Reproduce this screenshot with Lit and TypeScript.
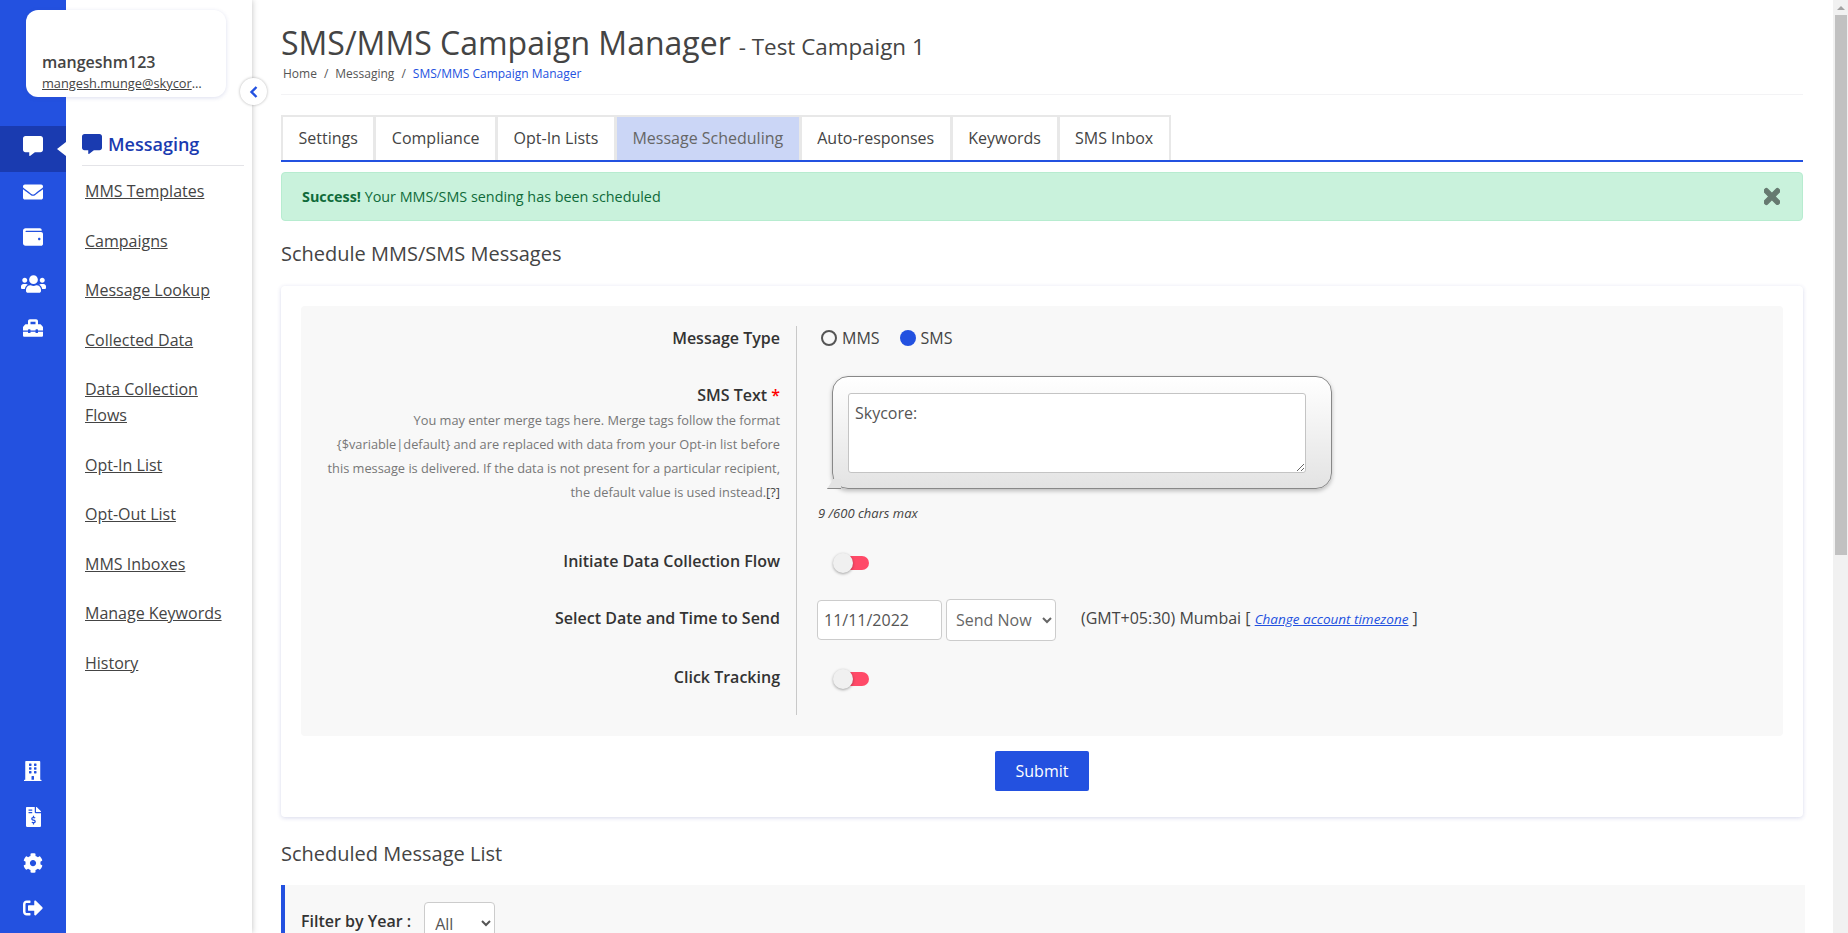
import { LitElement, html, css, svg } from "lit";
import { customElement } from "lit/decorators.js";

const I: Record<string, [number, string]> = {
  chat: [512, "M448 0H64C28.7 0 0 28.7 0 64v288c0 35.3 28.7 64 64 64h96v84c0 9.8 11.2 15.5 19.1 9.7L304 416h144c35.3 0 64-28.7 64-64V64c0-35.3-28.7-64-64-64z"],
  mail: [512, "M502.3 190.8c3.9-3.1 9.7-.2 9.7 4.7V400c0 26.5-21.5 48-48 48H48c-26.5 0-48-21.5-48-48V195.6c0-5 5.7-7.8 9.7-4.7 22.4 17.4 52.1 39.5 154.1 113.6 21.1 15.4 56.7 47.8 92.2 47.6 35.7.3 72-32.8 92.3-47.6 102-74.1 131.6-96.3 154-113.7zM256 320c23.2.4 56.6-29.2 73.4-41.4 132.7-96.3 142.8-104.7 173.4-128.7 5.8-4.5 9.2-11.5 9.2-18.9v-19c0-26.5-21.5-48-48-48H48C21.5 64 0 85.5 0 112v19c0 7.4 3.4 14.3 9.2 18.9 30.6 23.9 40.7 32.4 173.4 128.7 16.8 12.2 50.2 41.8 73.4 41.4z"],
  wallet: [512, "M461.2 128H80c-8.84 0-16-7.16-16-16s7.16-16 16-16h384c8.84 0 16-7.16 16-16 0-26.51-21.49-48-48-48H64C28.65 32 0 60.65 0 96v320c0 35.35 28.65 64 64 64h397.2c28.02 0 50.8-21.53 50.8-48V176c0-26.47-22.78-48-50.8-48zM416 336c-17.67 0-32-14.33-32-32s14.33-32 32-32 32 14.33 32 32-14.33 32-32 32z"],
  users: [640, "M96 224c35.3 0 64-28.7 64-64s-28.7-64-64-64-64 28.7-64 64 28.7 64 64 64zm448 0c35.3 0 64-28.7 64-64s-28.7-64-64-64-64 28.7-64 64 28.7 64 64 64zm32 32h-64c-17.6 0-33.5 7.1-45.1 18.6 40.3 22.1 68.9 62 75.1 109.4h66c17.7 0 32-14.3 32-32v-32c0-35.3-28.7-64-64-64zm-256 0c61.9 0 112-50.1 112-112S381.9 32 320 32 208 82.1 208 144s50.1 112 112 112zm76.8 32h-8.3c-20.8 10-43.9 16-68.5 16s-47.6-6-68.5-16h-8.3C179.6 288 128 339.6 128 403.2V432c0 26.5 21.5 48 48 48h288c26.5 0 48-21.5 48-48v-28.8c0-63.6-51.6-115.2-115.2-115.2zm-223.7-13.4C161.5 263.1 145.6 256 128 256H64c-35.3 0-64 28.7-64 64v32c0 17.7 14.3 32 32 32h65.9c6.3-47.4 34.9-87.3 75.2-109.4z"],
  toolbox: [512, "M502.63 214.63l-45.25-45.25c-6-6-14.14-9.37-22.63-9.37H384V80c0-26.51-21.49-48-48-48H176c-26.51 0-48 21.49-48 48v80H77.25c-8.49 0-16.62 3.37-22.63 9.37L9.37 214.63c-6 6-9.37 14.14-9.37 22.63V320h128v-16c0-8.84 7.16-16 16-16h32c8.84 0 16 7.16 16 16v16h128v-16c0-8.84 7.16-16 16-16h32c8.84 0 16 7.16 16 16v16h128v-82.75c0-8.48-3.37-16.62-9.37-22.62zM320 160H192V96h128v64zm64 208c0 8.84-7.16 16-16 16h-32c-8.84 0-16-7.16-16-16v-16H192v16c0 8.84-7.16 16-16 16h-32c-8.84 0-16-7.16-16-16v-16H0v96c0 17.67 14.33 32 32 32h448c17.67 0 32-14.33 32-32v-96H384v16z"],
  building: [448, "M436 480h-20V24c0-13.255-10.745-24-24-24H56C42.745 0 32 10.745 32 24v456H12c-6.627 0-12 5.373-12 12v20h448v-20c0-6.627-5.373-12-12-12zM128 76c0-6.627 5.373-12 12-12h40c6.627 0 12 5.373 12 12v40c0 6.627-5.373 12-12 12h-40c-6.627 0-12-5.373-12-12V76zm0 96c0-6.627 5.373-12 12-12h40c6.627 0 12 5.373 12 12v40c0 6.627-5.373 12-12 12h-40c-6.627 0-12-5.373-12-12v-40zm52 148h-40c-6.627 0-12-5.373-12-12v-40c0-6.627 5.373-12 12-12h40c6.627 0 12 5.373 12 12v40c0 6.627-5.373 12-12 12zm76 160h-64v-84c0-6.627 5.373-12 12-12h40c6.627 0 12 5.373 12 12v84zm64-172c0 6.627-5.373 12-12 12h-40c-6.627 0-12-5.373-12-12v-40c0-6.627 5.373-12 12-12h40c6.627 0 12 5.373 12 12v40zm0-96c0 6.627-5.373 12-12 12h-40c-6.627 0-12-5.373-12-12v-40c0-6.627 5.373-12 12-12h40c6.627 0 12 5.373 12 12v40zm0-96c0 6.627-5.373 12-12 12h-40c-6.627 0-12-5.373-12-12V76c0-6.627 5.373-12 12-12h40c6.627 0 12 5.373 12 12v40z"],
  invoice: [384, "M377 105L279.1 7c-4.5-4.5-10.6-7-17-7H256v128h128v-6.1c0-6.3-2.5-12.4-7-16.9zm-153 31V0H24C10.7 0 0 10.7 0 24v464c0 13.3 10.7 24 24 24h336c13.3 0 24-10.7 24-24V160H248c-13.2 0-24-10.8-24-24zM64 72c0-4.42 3.58-8 8-8h80c4.42 0 8 3.58 8 8v16c0 4.42-3.58 8-8 8H72c-4.42 0-8-3.58-8-8V72zm0 80v-16c0-4.42 3.58-8 8-8h80c4.42 0 8 3.58 8 8v16c0 4.42-3.58 8-8 8H72c-4.42 0-8-3.58-8-8zm144 263.88V440c0 4.42-3.58 8-8 8h-16c-4.42 0-8-3.58-8-8v-24.29c-11.29-.58-22.27-4.52-31.37-11.35-3.9-2.93-4.1-8.77-.57-12.14l11.75-11.21c2.77-2.64 6.89-2.76 10.13-.73 3.87 2.42 8.26 3.72 12.82 3.72h28.11c6.5 0 11.8-5.92 11.8-13.19 0-5.95-3.61-11.19-8.77-12.73l-45-13.5c-18.59-5.58-31.58-23.42-31.58-43.39 0-24.52 19.05-44.44 42.67-45.07V232c0-4.42 3.58-8 8-8h16c4.42 0 8 3.58 8 8v24.29c11.29.58 22.27 4.51 31.37 11.35 3.9 2.93 4.1 8.77.57 12.14l-11.75 11.21c-2.77 2.64-6.89 2.76-10.13.73-3.87-2.43-8.26-3.72-12.82-3.72h-28.11c-6.5 0-11.8 5.92-11.8 13.19 0 5.95 3.61 11.19 8.77 12.73l45 13.5c18.59 5.58 31.58 23.42 31.58 43.39 0 24.53-19.05 44.44-42.67 45.07z"],
  cog: [512, "M487.4 315.7l-42.6-24.6c4.3-23.2 4.3-47 0-70.2l42.6-24.6c4.9-2.8 7.1-8.6 5.5-14-11.1-35.6-30-67.8-54.7-94.6-3.8-4.1-10-5.1-14.8-2.3L380.8 110c-17.9-15.4-38.5-27.3-60.8-35.1V25.8c0-5.6-3.9-10.5-9.4-11.7-36.7-8.2-74.3-7.8-109.2 0-5.5 1.2-9.4 6.1-9.4 11.7V75c-22.2 7.9-42.8 19.8-60.8 35.1L88.7 85.5c-4.9-2.8-11-1.9-14.8 2.3-24.7 26.7-43.6 58.9-54.7 94.6-1.7 5.4.6 11.2 5.5 14L67.3 221c-4.3 23.2-4.3 47 0 70.2l-42.6 24.6c-4.9 2.8-7.1 8.6-5.5 14 11.1 35.6 30 67.8 54.7 94.6 3.8 4.1 10 5.1 14.8 2.3l42.6-24.6c17.9 15.4 38.5 27.3 60.8 35.1v49.2c0 5.6 3.9 10.5 9.4 11.7 36.7 8.2 74.3 7.8 109.2 0 5.5-1.2 9.4-6.1 9.4-11.7v-49.2c22.2-7.9 42.8-19.8 60.8-35.1l42.6 24.6c4.9 2.8 11 1.9 14.8-2.3 24.7-26.7 43.6-58.9 54.7-94.6 1.5-5.5-.7-11.3-5.6-14.1zM256 336c-44.1 0-80-35.9-80-80s35.9-80 80-80 80 35.9 80 80-35.9 80-80 80z"],
  signout: [512, "M497 273L329 441c-15 15-41 4.5-41-17v-96H152c-13.3 0-24-10.7-24-24v-96c0-13.3 10.7-24 24-24h136V88c0-21.4 25.9-32 41-17l168 168c9.3 9.4 9.3 24.6 0 34zM192 436v-40c0-6.6-5.4-12-12-12H96c-17.7 0-32-14.3-32-32V160c0-17.7 14.3-32 32-32h84c6.6 0 12-5.4 12-12V76c0-6.6-5.4-12-12-12H96c-53 0-96 43-96 96v192c0 53 43 96 96 96h84c6.6 0 12-5.4 12-12z"],
  times: [352, "M242.72 256l100.07-100.07c12.28-12.28 12.28-32.19 0-44.48l-22.24-22.24c-12.28-12.28-32.19-12.28-44.48 0L176 189.28 75.93 89.21c-12.28-12.28-32.19-12.28-44.48 0L9.21 111.45c-12.28 12.28-12.28 32.19 0 44.48L109.28 256 9.21 356.07c-12.28 12.28-12.28 32.19 0 44.48l22.24 22.24c12.28 12.28 32.2 12.28 44.48 0L176 322.72l100.07 100.07c12.28 12.28 32.2 12.28 44.48 0l22.24-22.24c12.28-12.28 12.28-32.19 0-44.48L242.72 256z"],
};

const icon = (name: string, cls = "") => {
  const [w, d] = I[name];
  return html`<svg class="ic ${cls}" viewBox="0 0 ${w} 512" fill="currentColor">${svg`<path d=${d}></path>`}</svg>`;
};

const menu = ["MMS Templates", "Campaigns", "Message Lookup", "Collected Data", "Data Collection Flows", "Opt-In List", "Opt-Out List", "MMS Inboxes", "Manage Keywords", "History"];
const tabs = ["Settings", "Compliance", "Opt-In Lists", "Message Scheduling", "Auto-responses", "Keywords", "SMS Inbox"];

@customElement("app-root")
export class AppRoot extends LitElement {
  static styles = css`
    :host { display: block; height: 100vh; font-family: "Open Sans", sans-serif; color: #444; overflow: hidden; }
    * { box-sizing: border-box; }
    .app { display: flex; height: 933px; position: relative; overflow: hidden; background: #fff; }
    .rail { width: 66px; flex: none; background: #2351e0; color: #fff; display: flex; flex-direction: column; padding-top: 126px; position: relative; z-index: 1; }
    .rail-item { height: 46px; padding-top: 10px; display: flex; justify-content: center; position: relative; flex: none; }
    .rail-item.on { background: #1a3bb0; }
    .rail-item.on::after { content: ""; position: absolute; right: 0; top: 16px; border: 7px solid transparent; border-right: 9px solid #fff; border-left: 0; }
    .ic { display: block; height: 20px; width: auto; }
    .up { margin-top: -2px; }
    .up1 { margin-top: -1px; }
    .rail-bottom { margin-top: auto; margin-bottom: -2px; }
    .user { position: absolute; left: 26px; top: 10px; width: 200px; height: 87px; background: #fff; border-radius: 12px; box-shadow: 0 1px 4px rgba(60, 70, 160, .18); padding: 41px 20px 0 16px; z-index: 3; }
    .user-name { font-size: 16px; font-weight: 600; line-height: 22px; color: #444; }
    .user-mail { font-size: 12.8px; line-height: 20px; color: #444; text-decoration: underline; white-space: nowrap; overflow: hidden; text-overflow: ellipsis; display: block; }
    .collapse { position: absolute; left: 240px; top: 78px; width: 27px; height: 27px; border-radius: 50%; background: #fff; box-shadow: 0 0 3px rgba(0, 0, 0, .3); display: flex; align-items: center; justify-content: center; color: #2351e0; z-index: 3; }
    .collapse svg { width: 10px; height: 12px; }
    .side { width: 186px; flex: none; background: #fff; padding: 130px 8px 0 16px; box-shadow: 0 0 6px rgba(0, 0, 0, .25); position: relative; }
    .side-h { display: flex; gap: 6px; height: 36px; border-bottom: 1px solid #e4e4e8; color: #1a3bb0; font-size: 18px; font-weight: 600; line-height: 28px; margin-bottom: 12px; }
    .side-h .ic { height: 20px; margin-top: 4px; }
    .side a { display: block; margin: 0 12px 23.5px 3px; font-size: 16px; line-height: 26px; color: #444; text-decoration: underline; }
    .main { flex: 1; min-width: 0; padding: 0 30px 0 29px; overflow: hidden; }
    .title { display: flex; align-items: baseline; gap: 8px; height: 63px; padding-top: 18px; color: #444; }
    .title h1 { margin: 0; font-size: 32px; font-weight: 400; line-height: 50px; white-space: nowrap; }
    .title span { font-size: 22.4px; }
    .crumb { font-size: 12px; line-height: 18px; padding: 2px 0 0 2px; display: flex; gap: 7px; color: #555; height: 32px; border-bottom: 1px solid #f3f3f5; }
    .crumb b { font-weight: 400; color: #2351e0; }
    .tabs { display: flex; margin-top: 20px; border-bottom: 2px solid #2351e0; height: 47px; }
    .tab { font-size: 16px; height: 45px; line-height: 43px; padding: 0 15.5px; border: 2px solid #e8e8e8; border-bottom: 0; margin-right: -1px; background: #fff; color: #444; }
    .tab.on { background: #cbd6f6; color: #666; }
    .alert { margin-top: 10px; height: 49px; background: #c9f2dc; border: 1px solid #b7ecd0; border-radius: 4px; color: #0f6b3a; font-size: 14.35px; display: flex; align-items: center; justify-content: space-between; padding: 0 22px 0 20px; }
    .alert .ic { color: #667a70; height: 23px; stroke: currentColor; stroke-width: 28; }
    .h2 { font-size: 20px; line-height: 28px; color: #444; margin: 0; font-weight: 400; }
    .h2.a { margin-top: 19px; }
    .h2.b { margin-top: 23px; }
    .card { margin-top: 18px; height: 531px; background: #fff; border-radius: 4px; box-shadow: 0 1px 4px rgba(60, 70, 160, .2); padding: 20px; display: flex; flex-direction: column; align-items: center; }
    .panel { width: 100%; height: 430px; background: #f8f8f8; border-radius: 4px; padding: 20px 0; }
    .row { display: grid; grid-template-columns: 495px 1fr; grid-template-rows: 100%; }
    .row > div:first-child { padding: 0 16px 0 20px; text-align: right; }
    .row > div:last-child { border-left: 1px solid #c9c9c9; padding-left: 21px; }
    .lab { font-size: 16px; font-weight: 600; line-height: 24px; color: #333; }
    .star { color: #f00; }
    .help { font-size: 12.8px; line-height: 24px; color: #777; margin-top: 1px; }
    .help em { font-style: normal; color: #444; }
    .r1 { height: 50px; }
    .r2 { height: 160px; }
    .r3 { height: 58px; }
    .r4 { height: 58px; }
    .r5 { height: 63px; }
    .row > .pt13:first-child { padding-top: 13px; }
    .row > .pt12:first-child { padding-top: 12px; }
    .row > .pt7:first-child { padding-top: 7px; }
    .radios { display: flex; align-items: flex-start; font-size: 16px; line-height: 24px; color: #444; }
    .radios input { appearance: none; width: 16px; height: 16px; margin: 0 5px 0 0; border-radius: 50%; border: 2px solid #555; background: transparent; }
    .radios input:checked { border: 0; background: #2351e0; }
    .radios label { display: flex; align-items: center; margin: 0 17px 0 3px; }
    .bubble { position: relative; margin-left: 14px; width: 500px; height: 113px; border: 1px solid #888; border-radius: 16px; background: linear-gradient(#fff, #e3e3e3); box-shadow: 0 2px 4px rgba(0, 0, 0, .25); padding: 16px 24px 0 15px; }
    .bubble::before { content: ""; position: absolute; left: -6px; bottom: -1px; width: 14px; height: 9px; background: #e3e3e3; border-bottom: 1px solid #888; clip-path: polygon(45% 0, 100% 0, 100% 100%, 0 100%); }
    textarea { display: block; width: 458px; height: 80px; border: 1px solid #c4c4c4; border-radius: 3px; background: #fff; padding: 8px 6px; font: 16px/22px "Open Sans", sans-serif; color: #555; outline: none; }
    .count { font-size: 13px; font-style: italic; color: #444; line-height: 18px; margin-top: 15px; }
    .toggle { position: relative; width: 35px; height: 14px; margin: 20px 0 0 16px; background: #ff4a68; border-radius: 7px; }
    .toggle::after { content: ""; position: absolute; left: -1px; top: -3px; width: 20px; height: 20px; border-radius: 50%; background: #f0f0f0; box-shadow: 0 1px 3px rgba(0, 0, 0, .35); }
    .row > .when { display: flex; align-items: flex-start; font-size: 16px; line-height: 24px; color: #444; padding-top: 6px; }
    .when input { width: 125px; height: 40px; border: 1px solid #ccc; border-radius: 4px; padding: 0 6px; font: 16px "Open Sans", sans-serif; color: #555; background: #fff; margin: 0 4px 0 -1px; }
    .when select { width: 110px; height: 42px; border: 1px solid #ccc; border-radius: 4px; padding: 0 5px; font: 16px "Open Sans", sans-serif; color: #666; background: #fff; margin: -1px 25px 0 0; }
    .when span { margin-top: 6px; }
    .when a { font-size: 13.5px; font-style: italic; color: #2351e0; text-decoration: underline; }
    .submit { margin-top: 15px; width: 94px; height: 40px; flex: none; background: #2351e0; color: #fff; border: 0; border-radius: 2px; font: 16px "Open Sans", sans-serif; }
    .filter { margin-top: 17px; margin-right: -2px; height: 60px; background: #f8f8f8; border-left: 4px solid #2351e0; padding: 18px 0 0 16px; display: flex; gap: 13px; }
    .filter .lab { line-height: 36px; }
    .filter select { width: 71px; height: 42px; margin-top: -1px; border: 1px solid #ccc; border-radius: 4px; background: #fff; font: 16px "Open Sans", sans-serif; color: #555; padding: 1px 6px 0; }
    .sb { width: 15px; flex: none; background: #f1f1f1; position: relative; }
    .sb-up { height: 15px; display: flex; align-items: center; justify-content: center; }
    .sb-up::before { content: ""; border: 4px solid transparent; border-bottom: 4px solid #a3a3a3; border-top: 0; }
    .sb-th { margin: 0 1px 0 2px; height: 540px; background: #c1c1c1; }
  `;

  render() {
    return html`
      <div class="app">
        <nav class="rail">
          <div class="rail-item on">${icon("chat")}</div>
          <div class="rail-item">${icon("mail")}</div>
          <div class="rail-item">${icon("wallet", "up1")}</div>
          <div class="rail-item">${icon("users")}</div>
          <div class="rail-item">${icon("toolbox", "up")}</div>
          <div class="rail-bottom">
            <div class="rail-item">${icon("building")}</div>
            <div class="rail-item">${icon("invoice")}</div>
            <div class="rail-item">${icon("cog")}</div>
            <div class="rail-item">${icon("signout", "up1")}</div>
          </div>
        </nav>
        <aside class="side">
          <div class="side-h">${icon("chat")}<span>Messaging</span></div>
          ${menu.map((m) => html`<a>${m}</a>`)}
        </aside>
        <div class="user">
          <div class="user-name">mangeshm123</div>
          <span class="user-mail">mangesh.munge@skycore.com</span>
        </div>
        <div class="collapse">
          <svg viewBox="0 0 10 12" fill="none" stroke="currentColor" stroke-width="2.4"><path d="M7.5 1 L2.5 6 L7.5 11"></path></svg>
        </div>
        <main class="main">
          <div class="title"><h1>SMS/MMS Campaign Manager</h1><span>- Test Campaign 1</span></div>
          <div class="crumb"><span>Home</span><span>/</span><span>Messaging</span><span>/</span><b>SMS/MMS Campaign Manager</b></div>
          <div class="tabs">${tabs.map((t) => html`<div class="tab ${t === "Message Scheduling" ? "on" : ""}">${t}</div>`)}</div>
          <div class="alert"><span><strong>Success!</strong> Your MMS/SMS sending has been scheduled</span>${icon("times")}</div>
          <h2 class="h2 a">Schedule MMS/SMS Messages</h2>
          <section class="card">
            <div class="panel">
              <div class="row r1">
                <div class="lab">Message Type</div>
                <div class="radios">
                  <label><input type="radio" name="t" />MMS</label>
                  <label><input type="radio" name="t" checked />SMS</label>
                </div>
              </div>
              <div class="row r2">
                <div class="pt7">
                  <div class="lab">SMS Text <span class="star">*</span></div>
                  <div class="help">You may enter merge tags here. Merge tags follow the format {$variable|default} and are replaced with data from your Opt-in list before this message is delivered. If the data is not present for a particular recipient, the default value is used instead.<em>[?]</em></div>
                </div>
                <div>
                  <div class="bubble"><textarea .value=${"Skycore:"}></textarea></div>
                  <div class="count">9 /600 chars max</div>
                </div>
              </div>
              <div class="row r3">
                <div class="lab pt13">Initiate Data Collection Flow</div>
                <div><div class="toggle"></div></div>
              </div>
              <div class="row r4">
                <div class="lab pt12">Select Date and Time to Send</div>
                <div class="when">
                  <input type="text" value="11/11/2022" />
                  <select><option>Send Now</option></select>
                  <span>(GMT+05:30) Mumbai [ <a>Change account timezone</a> ]</span>
                </div>
              </div>
              <div class="row r5">
                <div class="lab pt13">Click Tracking</div>
                <div><div class="toggle"></div></div>
              </div>
            </div>
            <button class="submit">Submit</button>
          </section>
          <h2 class="h2 b">Scheduled Message List</h2>
          <div class="filter">
            <div class="lab">Filter by Year :</div>
            <select><option>All</option></select>
          </div>
        </main>
        <div class="sb"><div class="sb-up"></div><div class="sb-th"></div></div>
      </div>
    `;
  }
}
